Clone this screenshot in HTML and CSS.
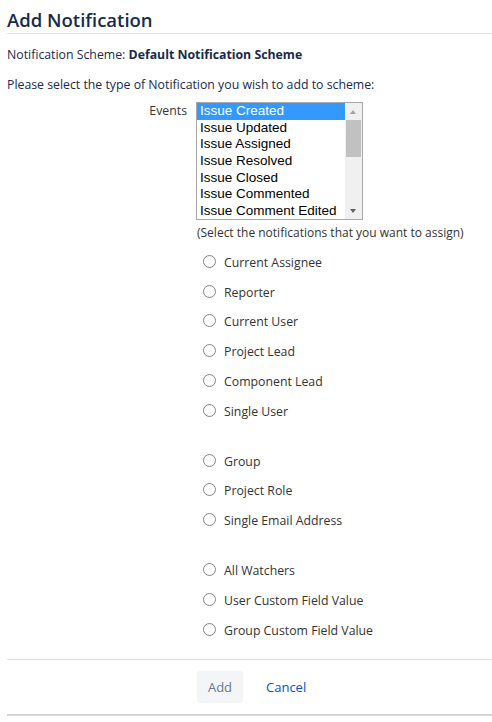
FILE: index.html
```html
<!DOCTYPE html>
<html>
<head>
<meta charset="utf-8">
<link rel="stylesheet" href="styles.css">
</head>
<body>
<div class="page">
  <h2 class="title">Add Notification</h2>
  <p class="scheme">Notification Scheme: <strong>Default Notification Scheme</strong></p>
  <p class="intro">Please select the type of Notification you wish to add to scheme:</p>
  <div class="form">
    <div class="row">
      <div class="label">Events</div>
      <div class="field">
        <div class="listbox">
          <div class="options">
            <div class="opt selected">Issue Created</div>
            <div class="opt">Issue Updated</div>
            <div class="opt">Issue Assigned</div>
            <div class="opt">Issue Resolved</div>
            <div class="opt">Issue Closed</div>
            <div class="opt">Issue Commented</div>
            <div class="opt">Issue Comment Edited</div>
          </div>
          <div class="scrollbar">
            <div class="arrow up"></div>
            <div class="track"><div class="thumb"></div></div>
            <div class="arrow down"></div>
          </div>
        </div>
        <div class="hint">(Select the notifications that you want to assign)</div>
      </div>
    </div>
    <div class="radios">
      <div class="group">
        <label class="radio"><span class="circle"></span>Current Assignee</label>
        <label class="radio"><span class="circle"></span>Reporter</label>
        <label class="radio"><span class="circle"></span>Current User</label>
        <label class="radio"><span class="circle"></span>Project Lead</label>
        <label class="radio"><span class="circle"></span>Component Lead</label>
        <label class="radio"><span class="circle"></span>Single User</label>
      </div>
      <div class="group">
        <label class="radio"><span class="circle"></span>Group</label>
        <label class="radio"><span class="circle"></span>Project Role</label>
        <label class="radio"><span class="circle"></span>Single Email Address</label>
      </div>
      <div class="group">
        <label class="radio"><span class="circle"></span>All Watchers</label>
        <label class="radio"><span class="circle"></span>User Custom Field Value</label>
        <label class="radio"><span class="circle"></span>Group Custom Field Value</label>
      </div>
    </div>
    <div class="buttons">
      <button class="btn" type="button">Add</button>
      <a class="cancel" href="#">Cancel</a>
    </div>
  </div>
</div>
</body>
</html>
```

FILE: styles.css
```css
html, body {
  margin: 0;
  padding: 0;
  background: #fff;
}
body {
  font-family: "Open Sans", "Noto Sans", sans-serif;
  color: #172b4d;
  font-size: 12.3px;
}
.page {
  padding: 0 0 0 7px;
}
.title {
  margin: 0;
  padding-top: 8px;
  font-size: 18.5px;
  font-weight: 600;
  line-height: 24px;
  color: #172b4d;
  padding-bottom: 1px;
  border-bottom: 1px solid #dfe1e6;
}
.scheme {
  margin: 0;
  padding-top: 12px;
  line-height: 18px;
}
.scheme strong {
  font-weight: 700;
}
.intro {
  margin: 0;
  padding-top: 12px;
  line-height: 18px;
}
.form {
  padding-top: 8px;
}
.row {
  display: flex;
}
.label {
  width: 180px;
  text-align: right;
  padding-right: 9px;
  color: #333;
  line-height: 18px;
}
.field {
  display: flex;
  flex-direction: column;
}
.listbox {
  width: 165px;
  height: 116px;
  border: 1px solid #a9a9a9;
  display: flex;
  overflow: hidden;
  font-family: "Liberation Sans", Arial, sans-serif;
  font-size: 13.5px;
  color: #000;
}
.options {
  flex: 1;
}
.opt {
  height: 16.7px;
  line-height: 16px;
  padding-left: 3px;
  white-space: nowrap;
}
.opt.selected {
  background: #3399ff;
  color: #fff;
}
.scrollbar {
  width: 17px;
  background: #f0f0f0;
  display: flex;
  flex-direction: column;
}
.arrow {
  height: 17px;
  position: relative;
}
.arrow::after {
  content: "";
  position: absolute;
  left: 5px;
  width: 0;
  height: 0;
  border-left: 3.5px solid transparent;
  border-right: 3.5px solid transparent;
}
.arrow.up::after {
  top: 7px;
  border-bottom: 4px solid #a3a3a3;
}
.arrow.down::after {
  top: 7px;
  border-top: 4px solid #606060;
}
.track {
  flex: 1;
  padding: 0 1px;
}
.thumb {
  height: 37px;
  background: #c1c1c1;
}
.hint {
  padding-top: 4px;
  padding-left: 1px;
  color: #333;
  line-height: 18px;
  font-size: 12px;
}
.radios {
  padding-left: 196px;
  padding-top: 6px;
}
.group {
  display: flex;
  flex-direction: column;
  padding-bottom: 20px;
}
.group:last-child {
  padding-bottom: 13px;
}
.radio {
  display: flex;
  align-items: center;
  height: 29.8px;
  line-height: 18px;
  color: #333;
  font-size: 12.3px;
}
.circle {
  width: 11px;
  height: 11px;
  border: 1px solid #858585;
  border-radius: 50%;
  margin-left: 0;
  margin-right: 8px;
  margin-top: -3px;
  box-sizing: content-box;
}
.buttons {
  border-top: 1px solid #dfe1e6;
  border-bottom: 2px solid #d6d6d6;
  padding: 11px 0 11px 190px;
  display: flex;
  align-items: center;
  gap: 23px;
}
.btn {
  font-family: "Open Sans", "Noto Sans", sans-serif;
  font-size: 13px;
  background: #f4f5f7;
  border: none;
  border-radius: 3px;
  color: #6b778c;
  height: 32px;
  width: 46px;
  padding: 0;
}
.cancel {
  font-size: 13px;
  color: #0052cc;
  text-decoration: none;
}
```
